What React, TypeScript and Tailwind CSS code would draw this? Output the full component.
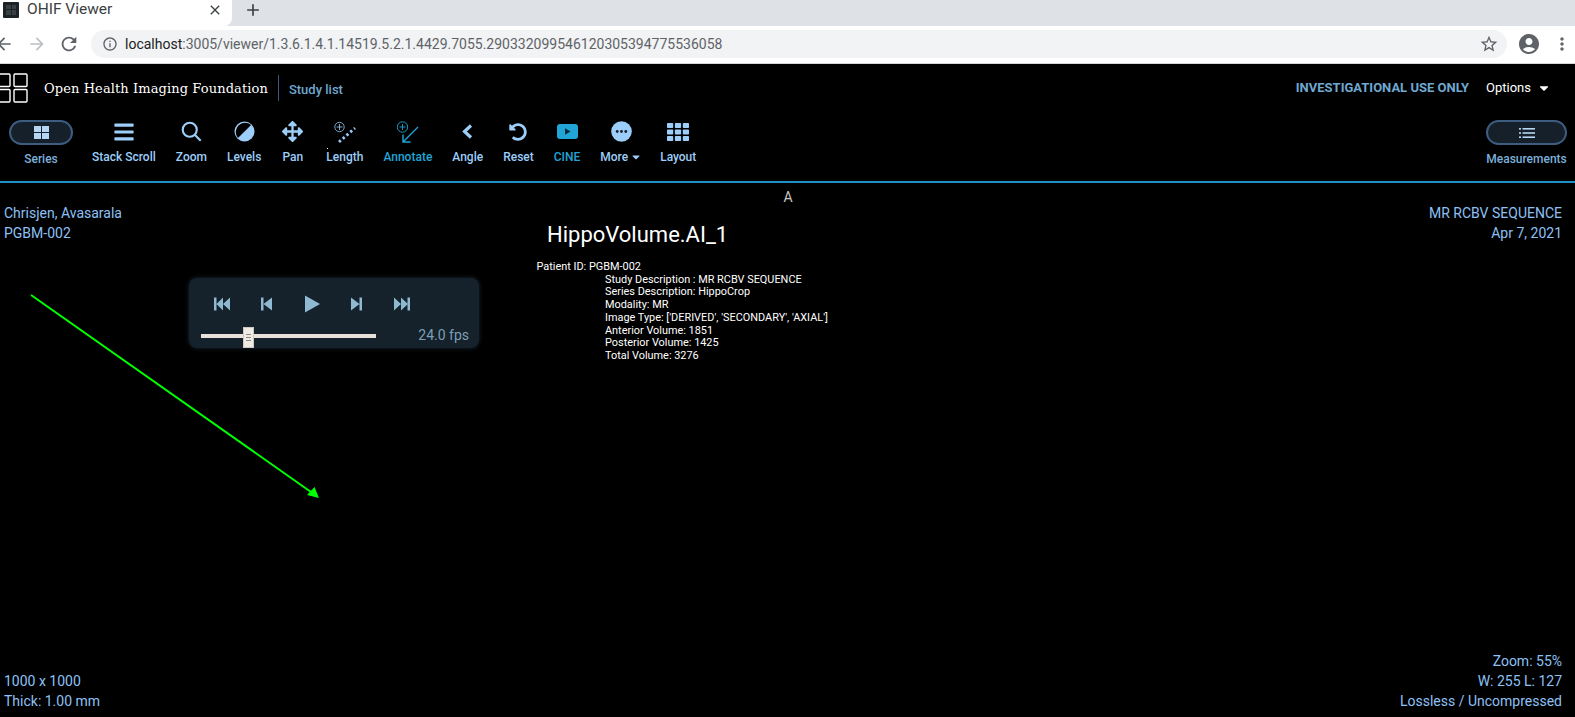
import type { ReactNode } from 'react';
import { FaArrowsAlt, FaBars, FaCaretDown, FaUndoAlt } from 'react-icons/fa';
import {
  MdAccountCircle,
  MdAdd,
  MdArrowBack,
  MdArrowForward,
  MdClose,
  MdInfoOutline,
  MdMoreVert,
  MdRefresh,
  MdStarBorder,
} from 'react-icons/md';

const LengthIcon = () => (
  <svg width="22" height="29" viewBox="0 0 22 29" fill="none">
    <circle cx="5.500" cy="10" r="4.700" stroke="currentColor" strokeWidth="0.8" />
    <path d="M5.500 7v6M2.500 10h6" stroke="currentColor" strokeWidth="0.8" />
    <path d="M5 25L21 11" stroke="currentColor" strokeWidth="2.800" strokeDasharray="2.400 2.600" />
  </svg>
);

const AnnotateIcon = () => (
  <svg width="22" height="29" viewBox="0 0 22 29" fill="none">
    <circle cx="5.500" cy="10" r="5.200" stroke="currentColor" strokeWidth="0.9" />
    <path d="M5.500 7v6M2.500 10h6" stroke="currentColor" strokeWidth="0.9" />
    <path d="M21 10L6 25M6 17.500V25H13.500" stroke="currentColor" strokeWidth="1.400" />
  </svg>
);

const ZoomIcon = () => (
  <svg width="21" height="21" viewBox="0 0 24 24" fill="none">
    <circle cx="10" cy="10" r="8" stroke="currentColor" strokeWidth="2.400" />
    <path d="M16 16l6.500 6.500" stroke="currentColor" strokeWidth="2.400" />
  </svg>
);

const LevelsIcon = () => (
  <svg width="21" height="21" viewBox="0 0 22 22">
    <circle cx="11" cy="11" r="10.500" fill="currentColor" />
    <path d="M3.600 18.400A10.500 10.500 0 0 1 18.400 3.600z" fill="#000" transform="translate(0.8 0.8) scale(0.93)" />
  </svg>
);

const AngleIcon = () => (
  <svg width="11" height="15" viewBox="0 0 11 15" fill="none">
    <path d="M9 1.500L2.500 7.500L9 13.500" stroke="currentColor" strokeWidth="3.200" />
  </svg>
);

const CineIcon = () => (
  <svg width="21" height="15" viewBox="0 0 21 15">
    <rect width="21" height="15" rx="3" fill="currentColor" />
    <path d="M8 4.200l5.600 3.300L8 10.800z" fill="#0a2a3a" />
  </svg>
);

const MoreIcon = () => (
  <svg width="21" height="21" viewBox="0 0 22 22">
    <circle cx="11" cy="11" r="10.800" fill="currentColor" />
    <circle cx="6.500" cy="11" r="1.500" fill="#16202b" />
    <circle cx="11" cy="11" r="1.500" fill="#16202b" />
    <circle cx="15.500" cy="11" r="1.500" fill="#16202b" />
  </svg>
);

const LayoutIcon = () => (
  <svg width="22" height="18" viewBox="0 0 22 18" fill="currentColor">
    <rect x="0" y="0" width="6.200" height="5" rx="0.8" />
    <rect x="7.900" y="0" width="6.200" height="5" rx="0.8" />
    <rect x="15.800" y="0" width="6.200" height="5" rx="0.8" />
    <rect x="0" y="6.500" width="6.200" height="5" rx="0.8" />
    <rect x="7.900" y="6.500" width="6.200" height="5" rx="0.8" />
    <rect x="15.800" y="6.500" width="6.200" height="5" rx="0.8" />
    <rect x="0" y="13" width="6.200" height="5" rx="0.8" />
    <rect x="7.900" y="13" width="6.200" height="5" rx="0.8" />
    <rect x="15.800" y="13" width="6.200" height="5" rx="0.8" />
  </svg>
);

const SeriesIcon = () => (
  <svg width="15" height="13" viewBox="0 0 15 13" fill="#b4d6f2">
    <rect width="7" height="6" />
    <rect x="8" width="7" height="6" />
    <rect y="7" width="7" height="6" />
    <rect x="8" y="7" width="7" height="6" />
  </svg>
);

const ListIcon = () => (
  <svg width="16" height="10" viewBox="0 0 16 10" fill="#b4d6f2">
    <rect width="2" height="1.600" />
    <rect x="3.500" width="12.500" height="1.600" />
    <rect y="4.200" width="2" height="1.600" />
    <rect x="3.500" y="4.200" width="12.500" height="1.600" />
    <rect y="8.400" width="2" height="1.600" />
    <rect x="3.500" y="8.400" width="12.500" height="1.600" />
  </svg>
);

const Logo = () => (
  <svg width="28" height="30" viewBox="0 0 28 30" fill="none" stroke="#fff" strokeWidth="1.400">
    <rect x="-5" y="1" width="15" height="12.500" rx="1" />
    <rect x="14" y="1" width="13" height="12.500" rx="1" />
    <rect x="-5" y="16.500" width="15" height="12.500" rx="1" />
    <rect x="14" y="16.500" width="13" height="12.500" rx="1" />
  </svg>
);

function ToolItem({ icon, label, active, className = '' }: { icon: ReactNode; label: ReactNode; active?: boolean; className?: string }) {
  return (
    <div className={`flex flex-col items-center ${active ? 'text-[#20a5d6]' : 'text-[#9ccef9]'} ${className}`}>
      <div className="h-[29px] flex items-center justify-center">{icon}</div>
      <div className="mt-[3px] text-[12px] leading-[16px] font-medium whitespace-nowrap">{label}</div>
    </div>
  );
}

function PillButton({ icon, label, className }: { icon: ReactNode; label: string; className: string }) {
  return (
    <div className="flex flex-col items-center">
      <div className={`h-[25px] rounded-full border-2 border-[#3c5d80] bg-[#16202b] flex items-center justify-center ${className}`}>
        {icon}
      </div>
      <div className="mt-[6px] text-[12px] leading-[16px] font-medium text-[#7cb0da]">{label}</div>
    </div>
  );
}

function CinePanel() {
  return (
    <div className="absolute left-[189px] top-[95px] w-[290px] h-[70px] rounded-[8px] bg-[#15212b] shadow-[0_0_4px_#1b2a36]">
      <svg className="absolute left-[25px] top-[17px]" width="200" height="18" viewBox="0 0 200 18" fill="#8fb9d0">
        <path d="M0 2.500h2.500v13H0zM9 2.500v13L2.500 9zM16 2.500v13L9 9z" />
        <path d="M47 2.500h2.500v13H47zM58 2.500v13L49.500 9z" />
        <path d="M91 0.500v17L106 9z" />
        <path d="M137 2.500v13l8.500-6.500zM145.500 2.500h2.500v13h-2.500z" />
        <path d="M180 2.500v13L187 9zM187 2.500v13L194 9zM193.500 2.500h2.500v13h-2.500z" />
      </svg>
      <div className="absolute left-[12px] top-[56px] w-[175px] h-[4px] bg-[#e8e2da]" />
      <div className="absolute left-[54px] top-[49px] w-[11px] h-[21px] bg-[#efeae4] border border-[#cfc9c2] flex flex-col items-center justify-center gap-[2px]">
        <div className="w-[5px] h-px bg-[#8d8a86]" />
        <div className="w-[5px] h-px bg-[#8d8a86]" />
        <div className="w-[5px] h-px bg-[#8d8a86]" />
      </div>
      <div className="absolute right-[10px] top-[47px] text-[14px] leading-[20px] text-[#7c9fb3]">24.0 fps</div>
    </div>
  );
}

const infoLines = [
  'Study Description : MR RCBV SEQUENCE',
  'Series Description: HippoCrop',
  'Modality: MR',
  "Image Type: ['DERIVED', 'SECONDARY', 'AXIAL']",
  'Anterior Volume: 1851',
  'Posterior Volume: 1425',
  'Total Volume: 3276',
];

export default function App() {
  return (
    <div className="w-[1575px] h-[717px] overflow-hidden bg-black flex flex-col font-['Roboto',sans-serif]">
      {/* browser tabs */}
      <div className="h-[26px] bg-[#dee1e6] flex items-stretch shrink-0">
        <div className="w-[232px] bg-white rounded-br-[8px] flex items-center pl-[3px] pr-[9px] pb-[7px]">
          <div className="w-[16px] h-[16px] bg-[#1d2226] rounded-[1px] grid grid-cols-2 gap-px p-[3px]">
            <div className="bg-[#3a3f44]" />
            <div className="bg-[#3a3f44]" />
            <div className="bg-[#3a3f44]" />
            <div className="bg-[#3a3f44]" />
          </div>
          <span className="ml-[8px] text-[15.500px] text-[#3c4043] flex-1">OHIF Viewer</span>
          <MdClose className="text-[#3c4043]" size={16} />
        </div>
        <div className="ml-[11px] flex items-center text-[#3c4043] pb-[7px]">
          <MdAdd size={20} />
        </div>
      </div>

      {/* address bar */}
      <div className="h-[38px] bg-white border-b border-[#d4d6d9] flex items-center shrink-0 pb-[1px]">
        <MdArrowBack className="-ml-[6px] text-[#5f6368]" size={20} />
        <MdArrowForward className="ml-[13px] text-[#bcbfc3]" size={20} />
        <MdRefresh className="ml-[11px] text-[#5f6368]" size={22} />
        <div className="ml-[11px] w-[1416px] h-[28px] rounded-full bg-[#f1f3f4] flex items-center pl-[11px] pr-[8px]">
          <MdInfoOutline className="text-[#5f6368]" size={16} />
          <span className="ml-[7px] text-[14px] text-[#202124]">localhost</span>
          <span className="text-[14px] text-[#5f6368]">:3005/viewer/1.3.6.1.4.1.14519.5.2.1.4429.7055.290332099546120305394775536058</span>
          <MdStarBorder className="ml-auto text-[#5f6368]" size={20} />
        </div>
        <MdAccountCircle className="ml-[10px] text-[#5f6368]" size={24} />
        <MdMoreVert className="ml-[11px] text-[#5f6368]" size={20} />
      </div>

      {/* app header */}
      <div className="h-[44px] flex items-center justify-between shrink-0 pt-[4px]">
        <div className="flex items-center">
          <Logo />
          <span className="ml-[16px] mt-[2px] font-['DejaVu_Serif',serif] text-[13px] text-white whitespace-nowrap tracking-[0.1px]">
            Open Health Imaging Foundation
          </span>
          <div className="ml-[10px] w-px h-[26px] bg-[#3c5d80]" />
          <span className="ml-[10px] mt-[4px] text-[13px] font-medium text-[#6fa8d1]">Study list</span>
        </div>
        <div className="flex items-center pr-[24px]">
          <span className="text-[13px] font-bold text-[#6fa8d1]">INVESTIGATIONAL USE ONLY</span>
          <span className="ml-[17px] text-[13px] text-white">Options</span>
          <FaCaretDown className="ml-[6px] text-white" size={14} />
        </div>
      </div>

      {/* toolbar */}
      <div className="h-[75px] border-b-2 border-[#1f8fc8] flex justify-between shrink-0 pt-[12px] pl-[9px] pr-[8px]">
        <div className="flex items-start">
          <PillButton icon={<SeriesIcon />} label="Series" className="w-[64px]" />
          <div className="ml-[19px] flex items-start gap-[20px] -mt-[3px]">
            <ToolItem icon={<FaBars size={22} />} label="Stack Scroll" />
            <ToolItem icon={<ZoomIcon />} label="Zoom" />
            <ToolItem icon={<LevelsIcon />} label="Levels" />
            <ToolItem icon={<FaArrowsAlt size={21} />} label="Pan" className="ml-[1px]" />
            <ToolItem
              icon={<LengthIcon />}
              label={
                <span className="relative">
                  <span className="absolute left-[1px] -top-[2px] w-px h-px bg-white" />
                  Length
                </span>
              }
              className="ml-[3px]"
            />
            <ToolItem icon={<AnnotateIcon />} label="Annotate" active />
            <ToolItem icon={<AngleIcon />} label="Angle" />
            <ToolItem icon={<FaUndoAlt size={18} />} label="Reset" />
            <ToolItem icon={<CineIcon />} label="CINE" active />
            <ToolItem
              icon={<MoreIcon />}
              label={
                <span className="flex items-center">
                  More
                  <FaCaretDown className="ml-[2px]" size={12} />
                </span>
              }
            />
            <ToolItem icon={<LayoutIcon />} label="Layout" className="-ml-[2px]" />
          </div>
        </div>
        <PillButton icon={<ListIcon />} label="Measurements" className="w-[81px]" />
      </div>

      {/* viewport */}
      <div className="relative flex-1 text-[14px] leading-[20px] text-[#8ec1f5]">
        <div className="absolute left-0 right-0 top-[4px] text-center text-[#c9c6c2] pl-[1px]">A</div>

        <div className="absolute left-[4px] top-[20px]">
          <div>Chrisjen, Avasarala</div>
          <div>PGBM-002</div>
        </div>
        <div className="absolute right-[13px] top-[20px] text-right">
          <div>MR RCBV SEQUENCE</div>
          <div>Apr 7, 2021</div>
        </div>
        <div className="absolute left-[4px] bottom-[6px]">
          <div>1000 x 1000</div>
          <div>Thick: 1.00 mm</div>
        </div>
        <div className="absolute right-[13px] bottom-[6px] text-right">
          <div>Zoom: 55%</div>
          <div>W: 255 L: 127</div>
          <div>Lossless / Uncompressed</div>
        </div>

        <svg className="absolute left-0 top-0" width="340" height="340" viewBox="0 0 340 340">
          <line x1="31" y1="112" x2="311" y2="309" stroke="#00ff00" strokeWidth="2" />
          <path d="M319 315L307 312L314.500 304z" fill="#00ff00" />
        </svg>

        <CinePanel />

        <div className="absolute left-[547px] top-[37px] text-[22px] leading-[30px] text-white">HippoVolume.AI_1</div>
        <div className="absolute left-[536.500px] top-[78px] text-[10.900px] leading-[12.700px] text-white">
          <div>Patient ID: PGBM-002</div>
          <div className="pl-[68.500px]">
            {infoLines.map((line) => (
              <div key={line}>{line}</div>
            ))}
          </div>
        </div>
      </div>
    </div>
  );
}
